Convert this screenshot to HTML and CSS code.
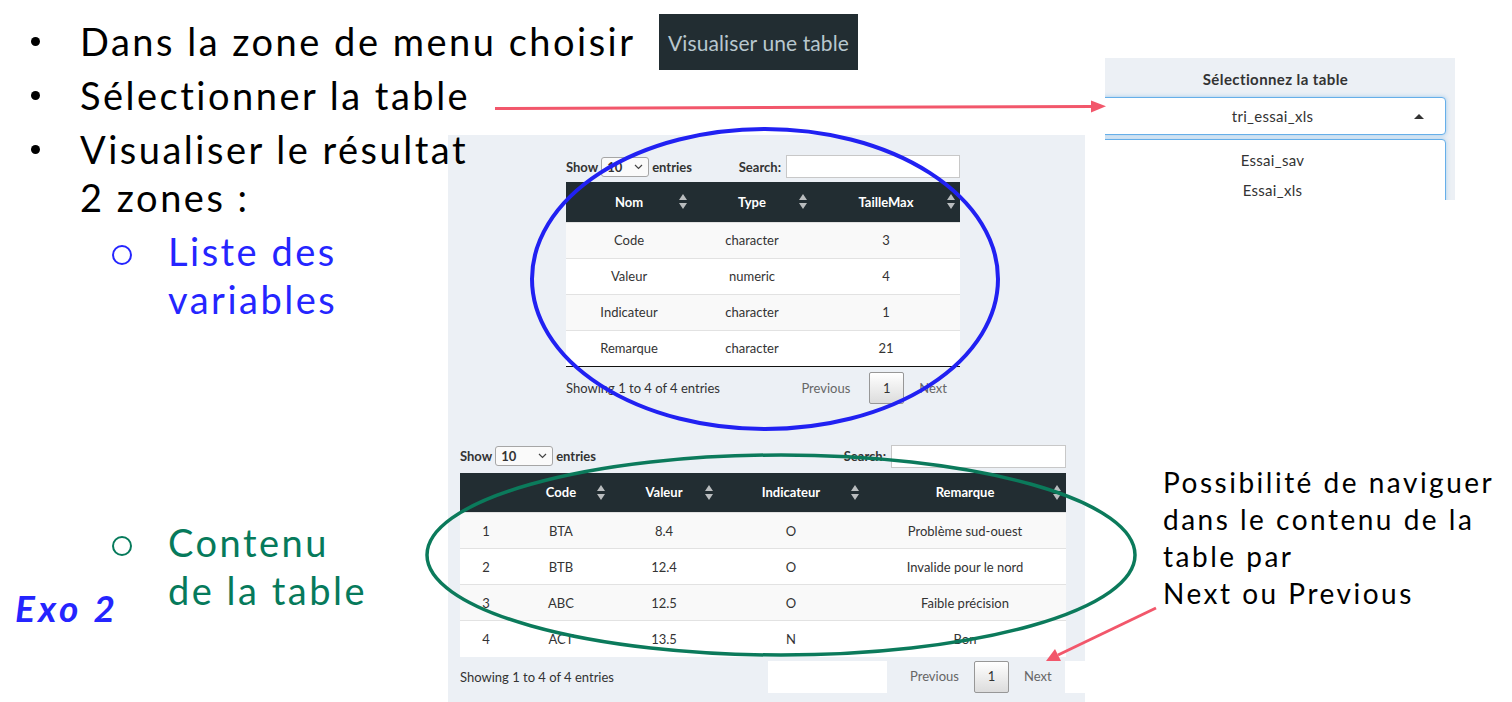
FILE: index.html
```html
<!DOCTYPE html>
<html lang="fr">
<head>
<meta charset="utf-8">
<title>Exo 2</title>
<link rel="stylesheet" href="styles.css">
</head>
<body>
<div class="slide">

  <div class="app-shot">
    <div class="dt dt-top">
      <div class="dt-controls">
        <div class="dt-length">Show <span class="dt-select">10 <svg width="9" height="6" viewBox="0 0 9 6"><path d="M1 1 L4.5 4.5 L8 1" fill="none" stroke="#444" stroke-width="1.2"/></svg></span> entries</div>
        <div class="dt-filter">Search: <span class="dt-input"></span></div>
      </div>
      <table class="dt-table dt-table-top">
        <colgroup><col style="width:126px"><col style="width:120px"><col style="width:148px"></colgroup>
        <thead>
          <tr>
            <th>Nom<span class="sort"><svg width="8" height="15" viewBox="0 0 8 15"><path d="M4 0 L8 6 L0 6 Z M0 9 L8 9 L4 15 Z" fill="#b9bcbe"/></svg></span></th>
            <th>Type<span class="sort"><svg width="8" height="15" viewBox="0 0 8 15"><path d="M4 0 L8 6 L0 6 Z M0 9 L8 9 L4 15 Z" fill="#b9bcbe"/></svg></span></th>
            <th>TailleMax<span class="sort"><svg width="8" height="15" viewBox="0 0 8 15"><path d="M4 0 L8 6 L0 6 Z M0 9 L8 9 L4 15 Z" fill="#b9bcbe"/></svg></span></th>
          </tr>
        </thead>
        <tbody>
          <tr><td>Code</td><td>character</td><td>3</td></tr>
          <tr><td>Valeur</td><td>numeric</td><td>4</td></tr>
          <tr><td>Indicateur</td><td>character</td><td>1</td></tr>
          <tr><td>Remarque</td><td>character</td><td>21</td></tr>
        </tbody>
      </table>
      <div class="dt-footer">
        <div class="dt-info">Showing 1 to 4 of 4 entries</div>
        <div class="dt-paginate">
          <span class="pg pg-off pg-prev">Previous</span>
          <span class="pg pg-current">1</span>
          <span class="pg pg-off">Next</span>
        </div>
      </div>
    </div>

    <div class="dt dt-bottom">
      <div class="dt-controls">
        <div class="dt-length">Show <span class="dt-select dt-select-wide">10 <svg width="9" height="6" viewBox="0 0 9 6"><path d="M1 1 L4.5 4.5 L8 1" fill="none" stroke="#444" stroke-width="1.2"/></svg></span> entries</div>
        <div class="dt-filter">Search: <span class="dt-input dt-input-wide"></span></div>
      </div>
      <table class="dt-table dt-table-bottom">
        <colgroup><col style="width:52px"><col style="width:98px"><col style="width:108px"><col style="width:146px"><col style="width:202px"></colgroup>
        <thead>
          <tr>
            <th></th>
            <th>Code<span class="sort"><svg width="8" height="15" viewBox="0 0 8 15"><path d="M4 0 L8 6 L0 6 Z M0 9 L8 9 L4 15 Z" fill="#b9bcbe"/></svg></span></th>
            <th>Valeur<span class="sort"><svg width="8" height="15" viewBox="0 0 8 15"><path d="M4 0 L8 6 L0 6 Z M0 9 L8 9 L4 15 Z" fill="#b9bcbe"/></svg></span></th>
            <th>Indicateur<span class="sort"><svg width="8" height="15" viewBox="0 0 8 15"><path d="M4 0 L8 6 L0 6 Z M0 9 L8 9 L4 15 Z" fill="#b9bcbe"/></svg></span></th>
            <th>Remarque<span class="sort"><svg width="8" height="15" viewBox="0 0 8 15"><path d="M4 0 L8 6 L0 6 Z M0 9 L8 9 L4 15 Z" fill="#b9bcbe"/></svg></span></th>
          </tr>
        </thead>
        <tbody>
          <tr><td>1</td><td>BTA</td><td>8.4</td><td>O</td><td>Problème sud-ouest</td></tr>
          <tr><td>2</td><td>BTB</td><td>12.4</td><td>O</td><td>Invalide pour le nord</td></tr>
          <tr><td>3</td><td>ABC</td><td>12.5</td><td>O</td><td>Faible précision</td></tr>
          <tr><td>4</td><td>ACT</td><td>13.5</td><td>N</td><td>Bon</td></tr>
        </tbody>
      </table>
    </div>

    <div class="dt-footer dt-footer-bottom">
      <div class="dt-info">Showing 1 to 4 of 4 entries</div>
      <div class="patch patch-mid"></div>
      <div class="dt-paginate">
        <span class="pg pg-off">Previous</span>
        <span class="pg pg-current">1</span>
        <span class="pg pg-off">Next</span>
      </div>
      <div class="patch patch-end"></div>
    </div>
  </div>

  <div class="bullets">
    <ul class="lvl1">
      <li>Dans la zone de menu choisir</li>
      <li>Sélectionner la table</li>
      <li>Visualiser le résultat<br>2 zones :
        <ul class="lvl2">
          <li class="sub-blue">Liste des<br>variables</li>
          <li class="sub-green">Contenu<br>de la table</li>
        </ul>
      </li>
    </ul>
  </div>

  <div class="menu-btn">Visualiser une table</div>

  <div class="select-shot">
    <div class="select-label">Sélectionnez la table</div>
    <div class="select-box">tri_essai_xls<span class="caret"></span></div>
    <div class="select-menu">
      <div class="select-opt">Essai_sav</div>
      <div class="select-opt">Essai_xls</div>
    </div>
  </div>

  <div class="note">Possibilité de naviguer<br>dans le contenu de la<br>table par<br>Next ou Previous</div>

  <div class="exo">Exo 2</div>

  <svg class="overlay" width="1512" height="702" viewBox="0 0 1512 702">
    <ellipse cx="765" cy="279" rx="233" ry="150" fill="none" stroke="#2121f2" stroke-width="4"/>
    <ellipse cx="781" cy="555" rx="354" ry="100" fill="none" stroke="#0b7a5b" stroke-width="3.5"/>
    <line x1="495" y1="108.5" x2="1093" y2="106.5" stroke="#f2576b" stroke-width="3"/>
    <path d="M1106 106.3 L1091 100.5 L1091 112.5 Z" fill="#f2576b"/>
    <line x1="1156" y1="608" x2="1058" y2="655" stroke="#f2576b" stroke-width="3"/>
    <path d="M1046 661 L1055 649 L1061 661 Z" fill="#f2576b"/>
  </svg>
</div>
</body>
</html>
```

FILE: styles.css
```css
* { box-sizing: border-box; }

html, body {
  margin: 0;
  padding: 0;
  background: #ffffff;
}

body {
  width: 1512px;
  height: 702px;
  overflow: hidden;
  font-family: Lato, "Noto Sans", sans-serif;
}

.slide {
  position: relative;
  width: 1512px;
  height: 702px;
  background: #ffffff;
}

/* ---------- slide text ---------- */
.bullets {
  position: absolute;
  left: 0;
  top: 17px;
  z-index: 3;
  color: #000;
  font-size: 38px;
  line-height: 48px;
  letter-spacing: 2.5px;
}

.lvl1, .lvl2 {
  list-style: none;
  margin: 0;
  padding: 0;
}

.lvl1 > li {
  position: relative;
  padding-left: 80px;
  margin-bottom: 6px;
}

.lvl1 > li::before {
  content: "";
  position: absolute;
  left: 31px;
  top: 20px;
  width: 9px;
  height: 9px;
  border-radius: 50%;
  background: #000;
}

.lvl2 {
  margin-top: 6px;
}

.lvl2 > li {
  position: relative;
  padding-left: 88px;
}

.lvl2 > li::before {
  content: "";
  position: absolute;
  left: 32px;
  top: 18px;
  width: 16px;
  height: 16px;
  border-radius: 50%;
  border: 2px solid currentColor;
}

.sub-blue { color: #2525ff; }
.sub-green { color: #067a5b; margin-top: 195px; }

.exo {
  position: absolute;
  left: 15px;
  top: 585px;
  z-index: 3;
  font-size: 37px;
  font-weight: 700;
  font-style: italic;
  letter-spacing: 3.5px;
  color: #2525ff;
}

.note {
  position: absolute;
  left: 1163px;
  top: 464px;
  z-index: 3;
  font-size: 28px;
  line-height: 37px;
  letter-spacing: 2.5px;
  color: #000;
}

/* ---------- menu button ---------- */
.menu-btn {
  position: absolute;
  left: 659px;
  top: 14px;
  width: 199px;
  height: 56px;
  background: #222d32;
  color: #b8c7ce;
  font-size: 21px;
  display: flex;
  align-items: center;
  justify-content: center;
  letter-spacing: 0.1px;
}

/* ---------- select screenshot ---------- */
.select-shot {
  position: absolute;
  left: 1105px;
  top: 58px;
  width: 350px;
  height: 142px;
  background: #ecf0f5;
  overflow: hidden;
  padding-top: 12px;
  font-size: 15px;
  color: #333;
}

.select-label {
  width: 341px;
  text-align: center;
  font-weight: 700;
  line-height: 18px;
  letter-spacing: 0.4px;
}

.select-box {
  position: relative;
  margin-top: 9px;
  margin-left: -6px;
  width: 347px;
  height: 38px;
  background: #fff;
  border: 1px solid #66afe9;
  border-radius: 4px;
  box-shadow: 0 0 4px rgba(102, 175, 233, 0.6);
  display: flex;
  align-items: center;
  justify-content: center;
  letter-spacing: 0.3px;
}

.caret {
  position: absolute;
  right: 21px;
  top: 16px;
  width: 0;
  height: 0;
  border-left: 5px solid transparent;
  border-right: 5px solid transparent;
  border-bottom: 5px solid #333;
}

.select-menu {
  margin-top: 4px;
  margin-left: -6px;
  width: 347px;
  height: 80px;
  background: #fff;
  border: 1px solid #66afe9;
  border-radius: 4px;
  box-shadow: 0 0 4px rgba(102, 175, 233, 0.5);
  padding-top: 5px;
}

.select-opt {
  text-align: center;
  line-height: 30px;
  letter-spacing: 0.3px;
}

/* ---------- app screenshot ---------- */
.app-shot {
  position: absolute;
  left: 448px;
  top: 135px;
  width: 637px;
  height: 567px;
  z-index: 1;
  background: #ecf0f5;
  font-size: 13px;
  color: #333;
  display: flex;
  flex-direction: column;
}

.dt-top {
  margin: 20px 0 0 118px;
  width: 394px;
}

.dt-bottom {
  margin: 40px 0 0 12px;
  width: 606px;
}

.dt-controls {
  display: flex;
  justify-content: space-between;
  align-items: center;
  height: 23px;
}

.dt-length, .dt-filter {
  display: flex;
  align-items: center;
  gap: 3px;
  font-weight: 700;
}

.dt-select {
  display: inline-flex;
  align-items: center;
  justify-content: space-between;
  width: 48px;
  height: 20px;
  padding: 0 5px;
  background: #fafafa;
  border: 1px solid #a6a6a6;
  border-radius: 3px;
  font-weight: 700;
  color: #333;
}

.dt-select-wide { width: 58px; }

.dt-input {
  display: inline-block;
  width: 174px;
  height: 23px;
  background: #fff;
  border: 1px solid #c8c8c8;
  margin-left: 2px;
}

.dt-input-wide { width: 175px; }

.dt-table {
  border-collapse: collapse;
  table-layout: fixed;
  margin-top: 4px;
}

.dt-table-top { width: 394px; }
.dt-table-bottom { width: 606px; margin-top: 5px; }

.dt-table th {
  position: relative;
  height: 40px;
  padding: 0;
  background: #222d32;
  color: #fff;
  font-weight: 700;
  text-align: center;
}

.sort {
  position: absolute;
  right: 5px;
  top: 12px;
  display: block;
  line-height: 0;
}

.dt-table td {
  height: 36px;
  padding: 0;
  text-align: center;
  border-top: 1px solid #e2e2e2;
}

.dt-table tbody tr:nth-child(odd) td { background: #f9f9f9; }
.dt-table tbody tr:nth-child(even) td { background: #ffffff; }

.dt-table-top tbody tr:last-child td { border-bottom: 1px solid #111; }

.dt-footer {
  display: flex;
  justify-content: space-between;
  align-items: center;
  margin-top: 5px;
  height: 33px;
}

.dt-paginate {
  display: flex;
  align-items: center;
}

.pg {
  padding: 7px 13px;
  margin-left: 2px;
  line-height: 17px;
}

.pg-prev { padding-right: 17px; }

.pg-off { color: #666; }

.pg-current {
  width: 35px;
  height: 32px;
  padding: 0;
  display: flex;
  align-items: center;
  justify-content: center;
  color: #333;
  border: 1px solid #979797;
  border-radius: 2px;
  background: linear-gradient(to bottom, #fff 0%, #dcdcdc 100%);
}

.dt-footer-bottom {
  margin-top: 4px;
  height: 32px;
  padding-left: 12px;
  justify-content: flex-start;
}

.dt-footer-bottom .dt-info { width: 308px; }

.patch {
  align-self: stretch;
  background: #fff;
}

.patch-mid { width: 119px; }
.patch-end { width: 20px; margin-left: auto; }

.dt-footer-bottom .dt-paginate { margin-left: 8px; }

/* ---------- overlay ---------- */
.overlay {
  position: absolute;
  left: 0;
  top: 0;
  z-index: 4;
  pointer-events: none;
}
```
